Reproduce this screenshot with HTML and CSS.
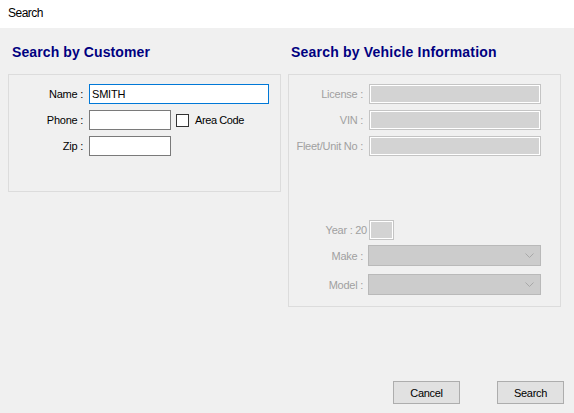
FILE: index.html
```html
<!DOCTYPE html>
<html>
<head>
<meta charset="utf-8">
<link rel="stylesheet" href="styles.css">
</head>
<body>
<div class="titlebar">Search</div>
<div class="content">
  <div class="columns">
    <div class="col col-left">
      <h2 class="heading">Search by Customer</h2>
      <div class="group group-customer">
        <div class="row">
          <span class="label">Name :</span>
          <div class="input input-focus input-name">SMITH</div>
        </div>
        <div class="row gap6">
          <span class="label">Phone :</span>
          <div class="input input-short"></div>
          <span class="checkbox"></span>
          <span class="check-label">Area Code</span>
        </div>
        <div class="row gap6">
          <span class="label">Zip :</span>
          <div class="input input-short"></div>
        </div>
      </div>
    </div>
    <div class="col col-right">
      <h2 class="heading">Search by Vehicle Information</h2>
      <div class="group group-vehicle">
        <div class="row">
          <span class="label disabled">License :</span>
          <div class="input input-disabled input-wide"></div>
        </div>
        <div class="row gap6">
          <span class="label disabled">VIN :</span>
          <div class="input input-disabled input-wide"></div>
        </div>
        <div class="row gap6">
          <span class="label disabled">Fleet/Unit No :</span>
          <div class="input input-disabled input-wide"></div>
        </div>
        <div class="row gap64">
          <span class="label disabled"><span class="year-text">Year : 20</span></span>
          <div class="input input-disabled input-year"></div>
        </div>
        <div class="row row-combo gap5">
          <span class="label disabled">Make :</span>
          <div class="combo"><svg class="chev" width="9" height="5" viewBox="0 0 9 5"><path d="M0.5 0.5 L4.5 4.5 L8.5 0.5" fill="none" stroke="#a8a8a8" stroke-width="1"/></svg></div>
        </div>
        <div class="row row-combo gap8">
          <span class="label disabled">Model :</span>
          <div class="combo"><svg class="chev" width="9" height="5" viewBox="0 0 9 5"><path d="M0.5 0.5 L4.5 4.5 L8.5 0.5" fill="none" stroke="#a8a8a8" stroke-width="1"/></svg></div>
        </div>
      </div>
    </div>
  </div>
  <div class="footer">
    <button class="btn">Cancel</button>
    <button class="btn">Search</button>
  </div>
</div>
</body>
</html>
```
FILE: styles.css
```css
html, body {
  margin: 0;
  padding: 0;
  width: 574px;
  height: 413px;
  overflow: hidden;
  background: #f0f0f0;
  font-family: "Liberation Sans", Arial, sans-serif;
  font-size: 11px;
  color: #000;
}
.titlebar {
  height: 28px;
  line-height: 26px;
  background: #fff;
  padding-left: 8px;
  font-size: 12px;
  letter-spacing: -0.5px;
}
.content {
  display: flex;
  flex-direction: column;
}
.columns {
  display: flex;
  align-items: flex-start;
  padding-left: 8px;
  gap: 7px;
}
.col {
  width: 273px;
  display: flex;
  flex-direction: column;
}
.heading {
  margin: 16px 0 14px 0;
  height: 16px;
  line-height: 16px;
  font-size: 14px;
  font-weight: bold;
  color: #000080;
  padding-left: 4px;
  letter-spacing: 0.1px;
}
.col-right .heading {
  padding-left: 3px;
  letter-spacing: 0.2px;
}
.group {
  border: 1px solid #dcdcdc;
  padding: 9px 0 0 0;
  display: flex;
  flex-direction: column;
  box-sizing: border-box;
}
.group-customer {
  height: 118px;
}
.group-vehicle {
  height: 233px;
}
.row {
  display: flex;
  align-items: center;
  height: 20px;
}
.row-combo {
  height: 21px;
}
.gap6 { margin-top: 6px; }
.gap64 { margin-top: 64px; }
.gap5 { margin-top: 5px; }
.gap8 { margin-top: 8px; }
.label {
  width: 74px;
  margin-right: 6px;
  text-align: right;
  white-space: nowrap;
  letter-spacing: -0.25px;
  flex: none;
}
.disabled {
  color: #a0a0a0;
}
.year-text {
  margin-right: -4px;
  display: inline-block;
}
.input {
  height: 20px;
  box-sizing: border-box;
  border: 1px solid #7a7a7a;
  background: #fff;
  flex: none;
  font-size: 11px;
  line-height: 18px;
  padding-left: 2px;
  letter-spacing: -0.2px;
}
.input-focus {
  border-color: #0078d7;
}
.input-name { width: 180px; }
.input-short { width: 82px; }
.input-disabled {
  border-color: #c4c4c4;
  background: #d3d3d3;
  box-shadow: inset 0 0 0 1px #ffffff;
}
.input-wide { width: 172px; }
.input-year { width: 25px; }
.checkbox {
  width: 13px;
  height: 13px;
  box-sizing: border-box;
  border: 1px solid #333;
  background: #fff;
  margin-left: 5px;
  flex: none;
}
.check-label {
  margin-left: 6px;
  letter-spacing: -0.4px;
}
.combo {
  width: 173px;
  height: 21px;
  box-sizing: border-box;
  border: 1px solid #b9b9b9;
  background: #cccccc;
  margin-left: -1px;
  display: flex;
  align-items: center;
  justify-content: flex-end;
  padding-right: 6px;
}
.chev { display: block; }
.footer {
  display: flex;
  justify-content: flex-end;
  gap: 37px;
  padding-right: 10px;
  margin-top: 74px;
}
.btn {
  width: 67px;
  height: 23px;
  box-sizing: border-box;
  border: 1px solid #adadad;
  background: #e1e1e1;
  font-family: "Liberation Sans", Arial, sans-serif;
  font-size: 11px;
  letter-spacing: -0.3px;
  color: #000;
  padding: 0;
  margin: 0;
  border-radius: 0;
}
```
